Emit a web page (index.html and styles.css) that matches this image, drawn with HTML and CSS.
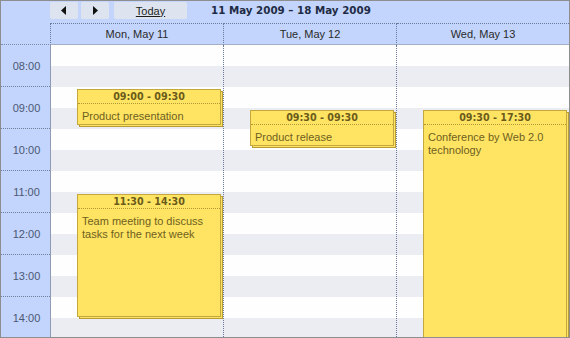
FILE: index.html
```html
<!DOCTYPE html>
<html>
<head>
<meta charset="utf-8">
<link rel="stylesheet" href="styles.css">
</head>
<body>
<div class="cal">
  <div class="toolbar">
    <button class="btn nav" aria-label="Previous"><svg width="6" height="9" viewBox="0 0 6 9"><path d="M5 0 L0 4.5 L5 9 Z" fill="#111"/></svg></button>
    <button class="btn nav" aria-label="Next"><svg width="6" height="9" viewBox="0 0 6 9"><path d="M1 0 L6 4.5 L1 9 Z" fill="#111"/></svg></button>
    <button class="btn today">Today</button>
    <div class="title">11 May 2009 – 18 May 2009</div>
  </div>
  <div class="dayhead">
    <div class="corner"></div>
    <div class="dh">Mon, May 11</div>
    <div class="dh">Tue, May 12</div>
    <div class="dh last">Wed, May 13</div>
  </div>
  <div class="body">
    <div class="times">
      <div class="slot">08:00</div>
      <div class="slot">09:00</div>
      <div class="slot">10:00</div>
      <div class="slot">11:00</div>
      <div class="slot">12:00</div>
      <div class="slot">13:00</div>
      <div class="slot">14:00</div>
    </div>
    <div class="day">
      <div class="event" style="top:44px;height:36px">
        <div class="ehead">09:00 - 09:30</div>
        <div class="etext">Product presentation</div>
      </div>
      <div class="event" style="top:149px;height:123px">
        <div class="ehead">11:30 - 14:30</div>
        <div class="etext">Team meeting to discuss tasks for the next week</div>
      </div>
    </div>
    <div class="day">
      <div class="event" style="top:65px;height:36px">
        <div class="ehead">09:30 - 09:30</div>
        <div class="etext">Product release</div>
      </div>
    </div>
    <div class="day last">
      <div class="event" style="top:65px;height:300px">
        <div class="ehead">09:30 - 17:30</div>
        <div class="etext">Conference by Web 2.0 technology</div>
      </div>
    </div>
  </div>
</div>
</body>
</html>
```

FILE: styles.css
```css
* { box-sizing: border-box; }
html, body { margin: 0; padding: 0; background: #fff; }
body { font-family: "Liberation Sans", Arial, sans-serif; font-size: 11px; }

.cal {
  width: 570px;
  height: 338px;
  border: 1px solid #8e8e8e;
  display: flex;
  flex-direction: column;
  background: #c3d5fc;
  overflow: hidden;
}

.toolbar {
  height: 22px;
  flex: none;
  display: flex;
  align-items: flex-start;
  padding: 1px 0 0 49px;
  gap: 3px;
}
.btn {
  height: 17px;
  border: none;
  border-radius: 2px;
  background: #dde4ef;
  padding: 0;
  margin: 0;
  display: flex;
  align-items: center;
  justify-content: center;
  font-family: inherit;
  font-size: 11px;
  color: #1e1e1e;
}
.nav { width: 28px; }
.today { width: 73px; margin-left: 2px; text-decoration: underline; }
.title {
  margin-left: 21px;
  font-family: "DejaVu Sans", Verdana, sans-serif;
  font-weight: bold;
  font-size: 10.3px;
  line-height: 17px;
  color: #1f2b45;
}

.dayhead {
  height: 22px;
  flex: none;
  display: grid;
  grid-template-columns: 50px 173px 173px 172px;
}
.corner {
  border-right: 1px dotted #6a7a9a;
  border-bottom: 1px dotted #7d8aa5;
}
.dh {
  border-top: 1px dotted #6a7a9a;
  border-right: 1px dotted #6a7a9a;
  border-bottom: 1px solid #a3aec4;
  display: flex;
  align-items: center;
  justify-content: center;
  color: #2a2a2a;
}
.dh.last { border-right: none; }

.body {
  flex: 1;
  display: grid;
  grid-template-columns: 50px 173px 173px 172px;
  overflow: hidden;
}
.times {
  border-right: 1px solid #8f9bb2;
}
.slot {
  height: 42px;
  border-bottom: 1px dotted #6f7e9c;
  display: flex;
  align-items: center;
  justify-content: center;
  color: #4c5874;
  padding-left: 2px;
}
.day {
  position: relative;
  border-right: 1px dotted #6a7a9a;
  background: repeating-linear-gradient(to bottom, #fefefe 0, #fefefe 21px, #ececf3 21px, #ececf3 42px);
}
.day.last { border-right: none; }

.event {
  position: absolute;
  left: 26px;
  width: 144px;
  background: #ffe463;
  border: 1px solid #c4a83d;
  box-shadow: 2px 2px 0 -1px #ffe463, 2px 2px 0 0 #b89c36;
  color: #6e5f1e;
}
.ehead {
  height: 14px;
  border-bottom: 1px dotted #b39836;
  text-align: center;
  font-family: "DejaVu Sans", Verdana, sans-serif;
  font-weight: bold;
  font-size: 9.6px;
  line-height: 13px;
  color: #6b5b1a;
}
.etext {
  padding: 6px 6px 0 4px;
  line-height: 13px;
}
```
